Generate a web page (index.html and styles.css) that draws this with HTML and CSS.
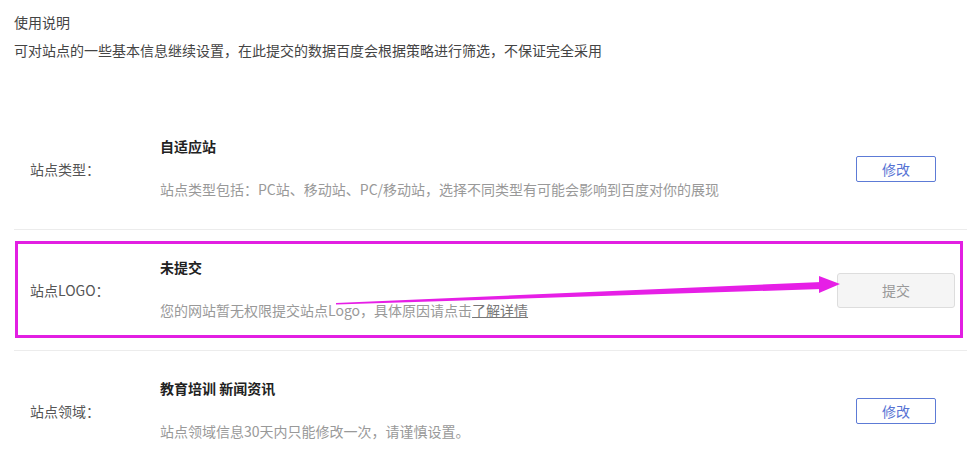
FILE: index.html
```html
<!DOCTYPE html>
<html lang="zh-CN">
<head>
  <meta charset="UTF-8">
  <title>站点属性</title>
  <link rel="stylesheet" href="styles.css">
</head>
<body>

  <!-- INTRO -->
  <div class="intro">
    <p class="intro-title">使用说明</p>
    <p>可对站点的一些基本信息继续设置，在此提交的数据百度会根据策略进行筛选，不保证完全采用</p>
  </div>

  <div class="list">
    <div class="row">
      <div class="label">站点类型：</div>
      <div class="info">
        <h4>自适应站</h4>
        <p>站点类型包括：PC站、移动站、PC/移动站，选择不同类型有可能会影响到百度对你的展现</p>
      </div>
      <div class="action"><button class="btn">修改</button></div>
    </div>

    <div class="row">
      <div class="label">站点LOGO：</div>
      <div class="info">
        <h4>未提交</h4>
        <p>您的网站暂无权限提交站点Logo，具体原因请点击<a href="#">了解详情</a></p>
      </div>
      <div class="action"><button class="btn btn-disabled">提交</button></div>

      <!-- annotation -->
      <div class="mark"></div>
      <svg class="arrow" width="967" height="464" viewBox="0 0 967 464">
        <polygon points="336,303 822,282 822,289 336,304.5" fill="#e61fe6"/>
        <polygon points="819,276 840,284 819,293" fill="#e61fe6"/>
      </svg>
    </div>

    <div class="row">
      <div class="label">站点领域：</div>
      <div class="info">
        <h4>教育培训 新闻资讯</h4>
        <p>站点领域信息30天内只能修改一次，请谨慎设置。</p>
      </div>
      <div class="action"><button class="btn">修改</button></div>
    </div>
  </div>

</body>
</html>
```

FILE: styles.css
```css
/* BASE */
* { margin: 0; padding: 0; box-sizing: border-box; }
body {
  font-family: "Noto Sans CJK SC", "Liberation Sans", sans-serif;
  font-size: 14px;
  color: #333;
  background: #fff;
  width: 967px;
  height: 464px;
  overflow: hidden;
  position: relative;
}
a { color: inherit; }

/* INTRO */
.intro {
  padding: 8px 14px 0;
  color: #444;
  line-height: 28px;
  height: 109px;
}

/* ROWS */
.list {
  margin-left: 14px;
}
.row {
  display: flex;
  align-items: center;
  height: 121px;
  border-bottom: 1px solid #ececec;
}
.label {
  width: 146px;
  padding-left: 16px;
  color: #555;
}
.info {
  flex: 1;
  margin-top: -3px;
}
.info h4 {
  font-size: 14px;
  font-weight: bold;
  color: #222;
  line-height: 20px;
  margin-bottom: 23px;
}
.info p {
  color: #999;
  line-height: 20px;
}
.info a {
  color: #777;
  text-decoration: underline;
}
.action {
  width: 142px;
  display: flex;
  justify-content: center;
}

/* BUTTONS */
.btn {
  font-family: inherit;
  font-size: 14px;
  width: 80px;
  height: 26px;
  background: #fff;
  color: #5673d4;
  border: 1px solid #5d7bd6;
  border-radius: 2px;
  cursor: pointer;
}
.btn-disabled {
  width: 118px;
  height: 35px;
  background: #f5f5f5;
  color: #999;
  border-color: #ddd;
  border-radius: 3px;
  cursor: default;
}

/* ANNOTATION */
.mark {
  position: absolute;
  left: 15px;
  top: 241px;
  width: 948px;
  height: 97px;
  border: 3px solid #e21fe2;
}
.arrow {
  position: absolute;
  left: 0;
  top: 0;
  pointer-events: none;
}
```
